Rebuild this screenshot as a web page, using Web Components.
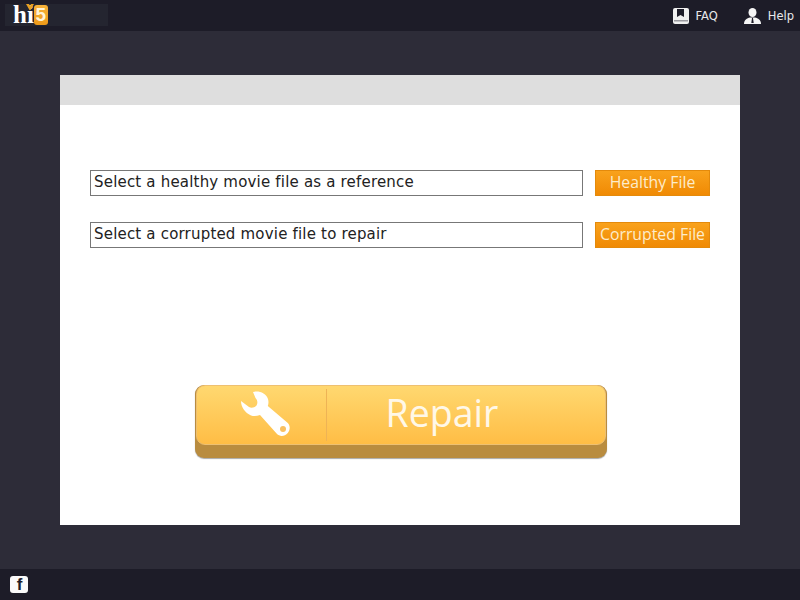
<!DOCTYPE html>
<html><head><meta charset="utf-8"><style>
html,body{margin:0;padding:0;width:800px;height:600px;overflow:hidden;background:#2d2c38}
app-shell{display:block;width:800px;height:600px}
</style></head><body>
<app-shell>
  <top-bar slot="top"></top-bar>
  <repair-card></repair-card>
  <foot-bar slot="foot"></foot-bar>
</app-shell>
<script>
function def(name,html){customElements.define(name,class extends HTMLElement{constructor(){super();this.attachShadow({mode:'open'}).innerHTML=html;}});}
def('app-shell',`<style>:host{display:flex;flex-direction:column;background:#2d2c38}
main{flex:1;padding:44px 60px 44px;display:flex}</style>
<slot name="top"></slot><main><slot></slot></main><slot name="foot"></slot>`);
def('hi-logo',`<style>:host{display:flex;width:103px;height:22px;margin:4px 0 0 5px;background:#242530;align-items:center;padding-left:8px;box-sizing:border-box}
.hi{position:relative;font:bold 25px/22px "Liberation Serif",serif;color:#fff;margin-top:-1px}
.v{position:absolute;left:13px;top:0;width:8px;height:6px}
.five{width:14px;height:20px;background:linear-gradient(#f7b23a,#ee9a18);border-radius:3px;margin-left:0;font:bold 19px/20px "Liberation Sans",sans-serif;color:#fff3d6;text-align:center}
</style><span class="hi">hi<svg class="v" viewBox="0 0 8 6"><path fill="#e8a020" d="M0 0h3l1 2 1-2h3L4.500 6h-1z"/></svg></span><span class="five">5</span>`);
def('top-bar',`<style>:host{display:flex;height:31px;background:#1d1c28;justify-content:space-between;flex:none}
nav{display:flex;align-items:center;font:11.500px "DejaVu Sans",sans-serif;color:#e8e8ea}
a{display:flex;align-items:center}
svg{display:block}
.faq{margin-right:26px}.faq svg{margin-right:7px}.help svg{margin-right:7px}.help{margin-right:6px}
</style><hi-logo></hi-logo><nav>
<a class="faq"><svg width="16" height="16" viewBox="0 0 16 16"><path fill="#f0f0f0" d="M2 0h12a2 2 0 0 1 2 2v12a2 2 0 0 1-2 2H2a2 2 0 0 1-2-2V2a2 2 0 0 1 2-2z"/><path fill="#1d1c28" d="M4 1h7v8L7.500 7 4 9z"/><path fill="#9a9aa0" d="M1 12h14v1.500H1z"/></svg>FAQ</a>
<a class="help"><svg width="17" height="16" viewBox="0 0 17 16"><ellipse cx="8.500" cy="4.500" rx="4" ry="4.500" fill="#f5f5f5"/><path fill="#f5f5f5" d="M0 16c0-4 3-6 6-6.500h5c3 .5 6 2.500 6 6.500z"/><path fill="#1d1c28" d="M8 10h1l.7 5h-2.400z"/></svg>Help</a>
</nav>`);
def('foot-bar',`<style>:host{display:flex;height:31px;background:#1d1c28;flex:none;align-items:center;padding-left:10px;box-sizing:border-box}
.f{width:18px;height:17px;background:#fafafa;border-radius:3px;display:flex;justify-content:center;align-items:flex-end;overflow:hidden}
.f span{font:bold 17px/16px "Liberation Sans",sans-serif;color:#1d1c28;margin-left:1px}</style><div class="f"><span>f</span></div>`);
def('file-row',`<style>:host{display:flex;gap:12px;height:26px}
.inp{width:493px;box-sizing:border-box;border:1px solid #777;background:#fff;padding-left:3px;font:15px/23px "DejaVu Sans",sans-serif;letter-spacing:.19px;color:#222;white-space:nowrap;overflow:hidden}
.btn{width:115px;box-sizing:border-box;border:1px solid #e48a0b;background:linear-gradient(#f9a21c,#f08a04);color:#fdeccb;font:15.800px/22px "Open Sans",sans-serif;text-align:center;white-space:nowrap}
</style><div class="inp"><slot name="text"></slot></div><div class="btn"><slot name="btn"></slot></div>`);
def('repair-button',`<style>:host{display:block;width:412px;height:73px;box-sizing:border-box;padding:0 1px;background:#b98c3f;border-radius:9px;box-shadow:0 1px 1px #a9a9a9;margin:0 auto}
.face{height:60px;box-sizing:border-box;border-radius:9px;border:1px solid #eec071;background:linear-gradient(#ffd870,#ffbd45);display:flex}
.ic{width:130px;box-sizing:border-box;border-right:1px solid #eeb355;margin:3px 0;display:flex;justify-content:center;align-items:flex-start}
.ic svg{margin:2px 0 0 6px}
.t{flex:1;text-align:center;color:#fff8e8;font:37.500px/54px "Open Sans",sans-serif;padding-right:48px}
</style><div class="face"><div class="ic"><svg width="50" height="48" viewBox="0 0 50 48"><path fill="#fff" d="M13 1c6-1.500 13 1 15 7 .8 3 .5 5-.2 7l20 17c2.500 2.500 2.500 7 0 10-3 3.500-8 4-11 .8L20 24c-3 1-6 1.500-9 .4C5 22 1 16 1 10l8 6c2.500 1.500 6 .5 7.500-1.500 1.500-2.500 1-5.500-1-7.500z"/><circle cx="43" cy="38" r="3" fill="#f9c060"/></svg></div><div class="t"><slot></slot></div></div>`);
def('repair-card',`<style>:host{display:block;width:680px;height:450px;background:#fff}
.head{height:30px;background:#dedede}
.rows{padding:65px 30px 0;display:flex;flex-direction:column;gap:26px}
.act{margin-top:137px;padding-left:135px;width:412px}
</style><div class="head"></div>
<div class="rows">
<file-row><span slot="text">Select a healthy movie file as a reference</span><span slot="btn">Healthy File</span></file-row>
<file-row><span slot="text">Select a corrupted movie file to repair</span><span slot="btn">Corrupted File</span></file-row>
</div><div class="act"><repair-button>Repair</repair-button></div>`);
</script>
</body></html>
